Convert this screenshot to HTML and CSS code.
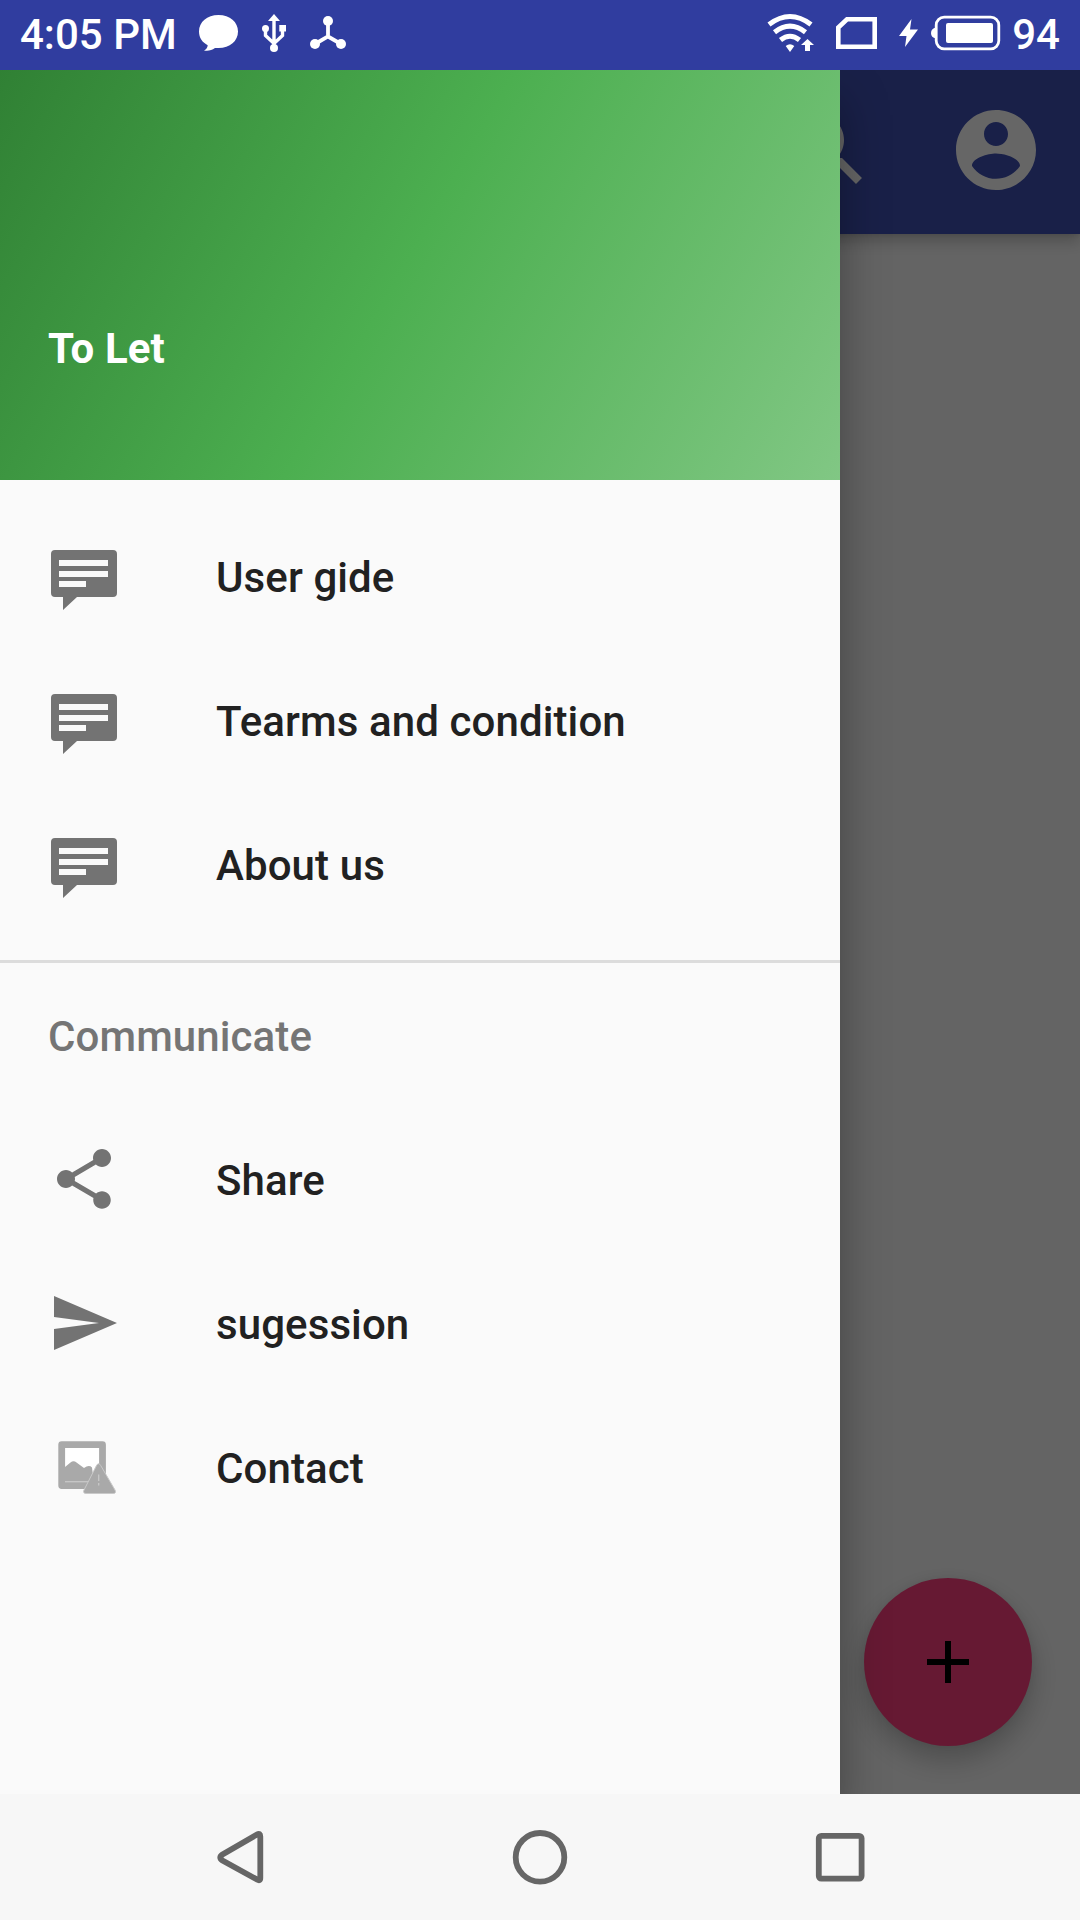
FILE: index.html
```html
<!DOCTYPE html>
<html lang="en">
<head>
<meta charset="utf-8">
<title>To Let</title>
<link rel="stylesheet" href="styles.css">
</head>
<body>
<div class="screen">
  <header class="status">
    <div class="status-left">
      <span class="clock">4:05 PM</span>
      <svg width="42" height="70" viewBox="198 0 42 70"><path d="M218.500 15C230 15 238 22 238 31.500C238 41 230 48 218.500 48H215C211.500 50.500 208 51.300 204 50.500C206.500 49 207.500 47.500 207.700 45.200C202.500 42.500 199 38 199 31.500C199 22 207 15 218.500 15Z"/></svg>
      <svg width="28" height="70" viewBox="260 0 28 70"><path d="M274 14l6 7h-12z"/><circle cx="265.500" cy="28.500" r="3.500"/><path d="M279.300 25h6.700v6.500h-6.700z"/><circle cx="274" cy="48" r="4"/><path class="line" d="M274 20V46M265.500 29V35.500L274 43.500L282.500 35.500V29" stroke-width="3.400"/></svg>
      <svg width="40" height="70" viewBox="308 0 40 70"><circle cx="328" cy="21" r="5"/><circle cx="315" cy="44" r="5"/><circle cx="341" cy="44" r="5"/><path class="line" d="M328 22V36.500L315 44M328 36.500L341 44" stroke-width="3.800"/></svg>
    </div>
    <div class="status-right">
      <svg width="48" height="70" viewBox="766 0 48 70"><path class="line" d="M769 24.500Q790 8.500 811 24.500" stroke-width="5"/><path class="line" d="M774.500 32.200Q790 20 805.500 32.200M780.500 40Q790 32.500 799.500 40" stroke-width="5"/><path d="M785.700 46Q790 42.500 794.300 46L790 52ZM807.500 39L814 45H810V51H805V45H801Z"/></svg>
      <svg width="46" height="70" viewBox="834 0 46 70"><path class="line" d="M847 19.300H874.700V46.700H838.300V27.500Z" stroke-width="4.600"/></svg>
      <svg width="22" height="70" viewBox="898 0 22 70"><path d="M911.500 19L899 36H906.500L905 47L918 29.500H910Z"/></svg>
      <svg width="71" height="70" viewBox="930 0 71 70"><rect class="line" x="936.200" y="17.200" width="62.600" height="31.600" rx="8" stroke-width="2.800"/><rect x="946" y="23" width="47" height="20" rx="2"/><path d="M936 27.500Q931 28.500 931 33T936 38.500Z"/></svg>
      <span class="level">94</span>
    </div>
  </header>

  <main class="stage">
    <div class="page">
      <div class="appbar">
        <svg width="96" height="96" viewBox="0 0 24 24"><path d="M15.500 14h-.79l-.28-.27C15.410 12.590 16 11.110 16 9.500 16 5.910 13.090 3 9.500 3S3 5.910 3 9.500 5.910 16 9.500 16c1.610 0 3.090-.59 4.230-1.570l.27.28v.79l5 4.990L20.490 19l-4.990-5zm-6 0C7.010 14 5 11.990 5 9.500S7.010 5 9.500 5 14 7.010 14 9.500 11.990 14 9.500 14z"/></svg>
        <svg width="96" height="96" viewBox="0 0 24 24"><path d="M12 2C6.480 2 2 6.480 2 12s4.480 10 10 10 10-4.480 10-10S17.520 2 12 2zm0 3c1.660 0 3 1.340 3 3s-1.340 3-3 3-3-1.340-3-3 1.340-3 3-3zm0 14.200c-2.500 0-4.710-1.280-6-3.220.03-1.990 4-3.080 6-3.080 1.990 0 5.970 1.090 6 3.080-1.290 1.940-3.500 3.220-6 3.220z"/></svg>
      </div>
      <div class="content">
        <button class="fab" aria-label="Add"><svg width="72" height="72" viewBox="0 0 24 24"><path d="M19 13h-6v6h-2v-6H5v-2h6V5h2v6h6v2z"/></svg></button>
      </div>
    </div>
    <div class="scrim"></div>
    <nav class="drawer">
      <div class="drawer-head">To Let</div>
      <div class="group">
        <a class="item"><svg width="72" height="72" viewBox="0 0 72 72"><path fill-rule="evenodd" d="M7 10H65a4 4 0 0 1 4 4V53a4 4 0 0 1-4 4H29L15 70V57H7a4 4 0 0 1-4-4V14a4 4 0 0 1 4-4ZM11 20V26H60V20ZM11 31V37H60V31ZM11 41V47H38V41Z"/></svg>User gide</a>
        <a class="item"><svg width="72" height="72" viewBox="0 0 72 72"><path fill-rule="evenodd" d="M7 10H65a4 4 0 0 1 4 4V53a4 4 0 0 1-4 4H29L15 70V57H7a4 4 0 0 1-4-4V14a4 4 0 0 1 4-4ZM11 20V26H60V20ZM11 31V37H60V31ZM11 41V47H38V41Z"/></svg>Tearms and condition</a>
        <a class="item"><svg width="72" height="72" viewBox="0 0 72 72"><path fill-rule="evenodd" d="M7 10H65a4 4 0 0 1 4 4V53a4 4 0 0 1-4 4H29L15 70V57H7a4 4 0 0 1-4-4V14a4 4 0 0 1 4-4ZM11 20V26H60V20ZM11 31V37H60V31ZM11 41V47H38V41Z"/></svg>About us</a>
      </div>
      <div class="group-title">Communicate</div>
      <a class="item"><svg width="72" height="72" viewBox="0 0 24 24"><path d="M18 16.080c-.76 0-1.440.3-1.960.77L8.910 12.700c.05-.23.09-.46.09-.7s-.04-.47-.09-.7l7.050-4.110c.54.5 1.250.81 2.040.81 1.660 0 3-1.340 3-3s-1.340-3-3-3-3 1.340-3 3c0 .24.040.47.090.7L8.040 9.810C7.500 9.310 6.790 9 6 9c-1.660 0-3 1.340-3 3s1.340 3 3 3c.79 0 1.500-.31 2.040-.81l7.120 4.160c-.05.21-.08.43-.08.650 0 1.610 1.310 2.920 2.920 2.920s2.920-1.310 2.920-2.920-1.310-2.920-2.920-2.920z"/></svg>Share</a>
      <a class="item"><svg width="72" height="72" viewBox="0 0 24 24"><path d="M2.010 21L23 12 2.010 3 2 10l15 2-15 2z"/></svg>sugession</a>
      <a class="item"><svg class="missing" width="72" height="72" viewBox="0 0 72 72"><rect class="frame" x="13.700" y="13.700" width="40.800" height="40.800"/><path d="M17 36L22.500 31.500Q25.500 29 28.500 31.500L36 37Q41 33.500 44 36.500L46 52H17Z"/><path class="mark" d="M17 50.700H42"/><path class="warn" d="M48.500 34.500Q50.500 31 52.700 34.500L67 59Q68.500 62.300 65.500 62.500H38Q34.500 62.300 36 59Z"/><path class="mark" d="M50.700 43.500V50M50.700 52V54.500"/></svg>Contact</a>
    </nav>
  </main>

  <footer class="navbar">
    <svg width="60" height="60" viewBox="0 0 60 60"><path d="M47 7.500Q50.300 5.500 50.300 9.500V51Q50.300 54.500 47 52.500L12.500 33.500Q8 30.500 12.500 27.500Z"/></svg>
    <svg width="60" height="60" viewBox="0 0 60 60"><circle cx="30" cy="30.300" r="24.300"/></svg>
    <svg width="60" height="60" viewBox="0 0 60 60"><rect x="8.800" y="8.800" width="42.800" height="42.800" rx="2.500"/></svg>
  </footer>
</div>
</body>
</html>
```
FILE: styles.css
```css
* { box-sizing: border-box; }
body { margin: 0; font-family: Roboto, sans-serif; font-size: 42px; font-weight: 500; line-height: 50px; }
svg { display: block; flex: none; }

.screen { width: 1080px; height: 1920px; display: flex; flex-direction: column; overflow: hidden; }

.status { height: 70px; flex: none; display: flex; justify-content: space-between; padding: 0 20px; background: #303d9f; color: #fff; position: relative; z-index: 1; }
.status svg { fill: #fff; }
.status .line { fill: none; stroke: #fff; }
.status-left, .status-right { display: flex; align-items: center; gap: 20px; }
.clock { width: 158px; white-space: nowrap; }
.status-right { gap: 18px; }
.status-right svg:nth-of-type(1) { margin-right: 2px; }
.status-right svg:nth-of-type(4) { margin-left: -8px; margin-right: -7px; }

.stage { flex: 1; display: grid; grid-template: 1fr / 840px 1fr; overflow: hidden; }
.page, .scrim { grid-area: 1 / 1 / 2 / 3; }
.page { display: flex; flex-direction: column; background: #fafafa; }
.appbar { height: 164px; flex: none; display: flex; justify-content: flex-end; align-items: center; gap: 72px; padding: 0 36px 4px; background: #3f51b5; fill: #fff; box-shadow: 0 8px 14px rgba(0, 0, 0, .2), 0 0 6px rgba(0, 0, 0, .15); }
.content { flex: 1; display: flex; justify-content: flex-end; align-items: flex-end; padding: 48px; }
.fab { width: 168px; height: 168px; padding: 0; border: 0; border-radius: 50%; display: grid; place-items: center; background: #ff4081; box-shadow: 0 14px 28px rgba(0, 0, 0, .23), 0 0 10px rgba(0, 0, 0, .06); }
.scrim { background: rgba(0, 0, 0, .6); z-index: 1; }

.drawer { grid-area: 1 / 1; z-index: 2; background: #fafafa; color: #212121; letter-spacing: .1px; box-shadow: 0 30px 44px rgba(0, 0, 0, .34); }
.drawer-head { height: 410px; display: flex; align-items: flex-end; padding: 0 48px 106px; color: #fff; font-weight: 700; background: linear-gradient(119.745deg, #2e7d32, #4caf50 50%, #81c784) bottom / 840px 480px no-repeat; }
.group { padding: 24px 0; border-bottom: 3px solid #dcdcdc; }
.item { height: 144px; display: flex; align-items: center; gap: 96px; padding: 4px 48px 0; }
.item svg { fill: #737373; margin-top: -4px; }
.item .missing { fill: #a9a9a9; }
.missing .frame { fill: #fff; stroke: #a9a9a9; stroke-width: 6.800; stroke-linejoin: round; }
.missing .warn { stroke: #c9c9c9; stroke-width: 1; }
.missing .mark { stroke: #c8c8c8; stroke-width: 1.300; }
.group-title { height: 144px; display: flex; align-items: center; padding: 4px 48px 0; color: #757575; }

.navbar { height: 126px; flex: none; display: flex; justify-content: center; align-items: center; gap: 240px; background: #f7f7f7; position: relative; z-index: 1; }
.navbar svg { fill: none; stroke: #666; stroke-width: 5.800; }
```
